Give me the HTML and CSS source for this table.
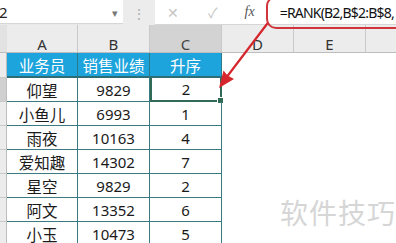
FILE: index.html
```html
<!DOCTYPE html>
<html>
<head>
<meta charset="utf-8">
<link rel="stylesheet" href="styles.css">
</head>
<body>
<div class="app">
  <div class="topbar">
    <div class="namebox"><span class="nb-text">2</span><span class="nb-arrow">▾</span></div>
    <div class="splitter">⋮</div>
    <div class="fbar">
      <span class="ficon cancel">✕</span>
      <span class="ficon ok">✓</span>
      <span class="ficon fx">fx</span>
      <div class="finput">=RANK(B2,B$2:B$8,</div>
    </div>
  </div>
  <div class="sheet">
    <div class="corner"></div>
    <div class="ch">A</div>
    <div class="ch">B</div>
    <div class="ch sel">C</div>
    <div class="ch">D</div>
    <div class="ch">E</div>
    <div class="ch last"></div>

    <div class="rh"></div>
    <div class="th">业务员</div>
    <div class="th">销售业绩</div>
    <div class="th">升序</div>
    <div class="blank"></div><div class="blank"></div><div class="blank"></div>

    <div class="rh sel"></div>
    <div class="td">仰望</div>
    <div class="td">9829</div>
    <div class="td active">2<span class="handle"></span></div>
    <div class="blank"></div><div class="blank"></div><div class="blank"></div>

    <div class="rh"></div>
    <div class="td">小鱼儿</div>
    <div class="td">6993</div>
    <div class="td">1</div>
    <div class="blank"></div><div class="blank"></div><div class="blank"></div>

    <div class="rh"></div>
    <div class="td">雨夜</div>
    <div class="td">10163</div>
    <div class="td">4</div>
    <div class="blank"></div><div class="blank"></div><div class="blank"></div>

    <div class="rh"></div>
    <div class="td">爱知趣</div>
    <div class="td">14302</div>
    <div class="td">7</div>
    <div class="blank"></div><div class="blank"></div><div class="blank"></div>

    <div class="rh"></div>
    <div class="td">星空</div>
    <div class="td">9829</div>
    <div class="td">2</div>
    <div class="blank"></div><div class="blank"></div><div class="blank"></div>

    <div class="rh"></div>
    <div class="td">阿文</div>
    <div class="td">13352</div>
    <div class="td">6</div>
    <div class="blank"></div><div class="blank"></div><div class="blank"></div>

    <div class="rh"></div>
    <div class="td">小玉</div>
    <div class="td">10473</div>
    <div class="td">5</div>
    <div class="blank"></div><div class="blank"></div><div class="blank"></div>
  </div>

  <div class="callout"></div>
  <svg class="arrow" width="396" height="243" viewBox="0 0 396 243">
    <line x1="267" y1="24" x2="226" y2="78" stroke="#d4262c" stroke-width="2.2" stroke-linecap="round"/>
    <polygon points="219,88 223.5,70.5 227.5,75.5 234,79" fill="#d4262c"/>
  </svg>
  <div class="watermark">软件技巧</div>
</div>
</body>
</html>
```
FILE: styles.css
```css
html, body {
  margin: 0;
  padding: 0;
  width: 396px;
  height: 243px;
  overflow: hidden;
  background: #ffffff;
}
.app {
  position: relative;
  width: 396px;
  height: 243px;
  overflow: hidden;
  font-family: "Noto Sans CJK SC", "Noto Sans", sans-serif;
}
.topbar {
  display: flex;
  height: 25px;
  background: #e9e9e9;
}
.namebox {
  flex: 0 0 123px;
  width: 123px;
  height: 24px;
  background: #fff;
  border-bottom: 1px solid #d6d6d6;
  display: flex;
  align-items: center;
  justify-content: space-between;
  box-sizing: border-box;
}
.nb-text {
  font-family: "Noto Sans", sans-serif;
  font-size: 15px;
  color: #222;
  margin-left: -1px;
}
.nb-arrow {
  font-size: 11px;
  color: #777;
  margin-right: 5px;
}
.splitter {
  flex: 0 0 32px;
  display: flex;
  align-items: center;
  justify-content: center;
  color: #b0b0b0;
  font-size: 14px;
  background: #ececec;
}
.fbar {
  flex: 1 1 auto;
  min-width: 0;
  overflow: hidden;
  height: 24px;
  background: #fff;
  border-bottom: 1px solid #d6d6d6;
  display: flex;
  align-items: center;
}
.ficon {
  flex: 0 0 auto;
  color: #c4c4c4;
  font-size: 14px;
}
.cancel { margin-left: 12px; }
.ok { margin-left: 29px; }
.fx {
  margin-left: 27px;
  font-family: "Liberation Serif", serif;
  font-style: italic;
  color: #555;
  font-size: 14px;
}
.finput {
  flex: 0 0 auto;
  margin-left: 25px;
  white-space: nowrap;
  font-family: "Noto Sans", sans-serif;
  font-size: 14px;
  letter-spacing: -0.8px;
  color: #111;
  padding-top: 1px;
}
.sheet {
  display: grid;
  grid-template-columns: 7px 71px 72px 72px 72px 72px 1fr;
  grid-template-rows: 28px 25px repeat(7, 24px);
}
.corner {
  background: #e2e2e2;
  border-bottom: 1px solid #bdbdbd;
}
.ch {
  background: #ececec;
  border-right: 1px solid #c9c9c9;
  border-bottom: 1px solid #bdbdbd;
  font-family: "Noto Sans", sans-serif;
  font-size: 15px;
  line-height: 15px;
  color: #333;
  display: flex;
  align-items: flex-start;
  justify-content: center;
  padding-top: 12px;
  box-sizing: border-box;
}
.ch.sel {
  background: #d3d3d3;
  color: #444;
}
.ch.last { border-right: none; }
.rh {
  background: #ececec;
  border-bottom: 1px solid #c9c9c9;
  border-right: 1px solid #bdbdbd;
  box-sizing: border-box;
}
.rh.sel { background: #d0d0d0; }
.th {
  background: #1ea4dc;
  color: #fff;
  font-size: 15.5px;
  font-weight: 400;
  display: flex;
  align-items: center;
  justify-content: center;
  border-right: 1px solid #2d7a86;
  border-bottom: 2px solid #2f6d74;
  box-sizing: border-box;
}
.td {
  position: relative;
  font-size: 15px;
  color: #1a1a1a;
  display: flex;
  align-items: center;
  justify-content: center;
  border-right: 1px solid #3a7a82;
  border-bottom: 1px solid #3a7a82;
  box-sizing: border-box;
  font-family: "Noto Sans", "Noto Sans CJK SC", sans-serif;
}
.td:nth-child(7n+2) {
  font-family: "Noto Sans CJK SC", sans-serif;
  font-size: 15.5px;
}
.td.active {
  border: 2px solid #2f6b55;
  border-top: none;
}
.handle {
  position: absolute;
  right: -4px;
  bottom: -4px;
  width: 5px;
  height: 5px;
  background: #2f6b55;
  border: 1px solid #fff;
}
.blank {
  background: #fff;
}
.callout {
  position: absolute;
  left: 266px;
  top: -4px;
  width: 150px;
  height: 29px;
  border: 2.5px solid #cf353b;
  border-radius: 10px;
}
.arrow {
  position: absolute;
  left: 0;
  top: 0;
}
.watermark {
  position: absolute;
  left: 280px;
  top: 192px;
  font-family: "Noto Sans CJK SC", sans-serif;
  font-size: 28px;
  color: #d6d6d6;
  letter-spacing: 1px;
}
```
